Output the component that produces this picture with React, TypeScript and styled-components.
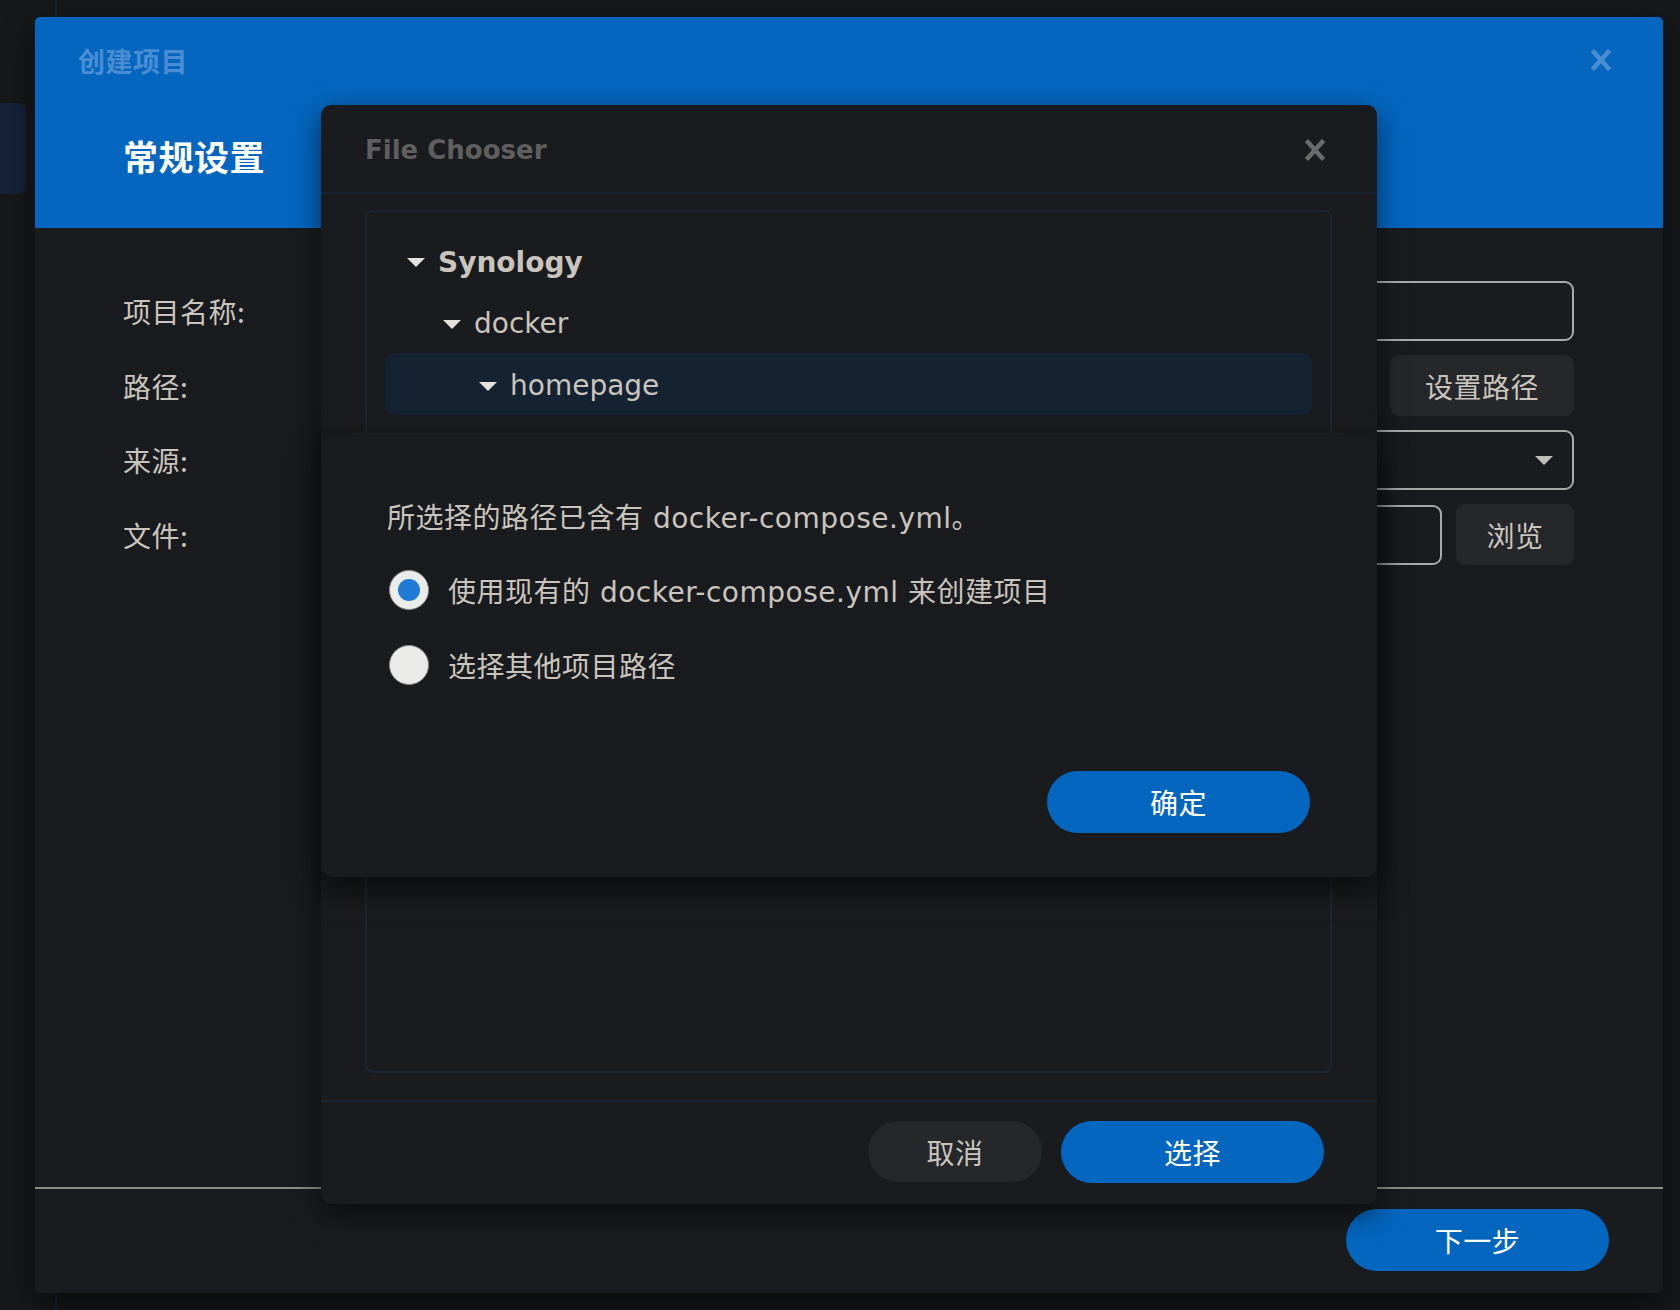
import styled, { createGlobalStyle } from "styled-components";

const GlobalStyle = createGlobalStyle`
  html, body {
    margin: 0;
    padding: 0;
    background: #17181a;
  }
  body {
    font-family: "DejaVu Sans", "Noto Sans CJK SC", sans-serif;
    color: #c9c5be;
  }
  * {
    box-sizing: border-box;
  }
`;

const BLUE = "#0466bf";
const TEXT = "#c9c5be";

const Desktop = styled.div`
  position: relative;
  width: 1680px;
  height: 1310px;
  overflow: hidden;
  padding: 17px 17px 0 35px;
  background: linear-gradient(
      to right,
      transparent 55px,
      #172235 55px,
      #172235 57px,
      transparent 57px
    ),
    #17181a;
`;

const SideTab = styled.div`
  position: absolute;
  left: 0;
  top: 103px;
  width: 26px;
  height: 91px;
  background: #16223a;
  border-radius: 0 8px 8px 0;
`;

const Wizard = styled.div`
  position: relative;
  width: 1628px;
  height: 1276px;
  display: flex;
  flex-direction: column;
  background: #1a1b1e;
  border-radius: 5px;
  overflow: hidden;
  box-shadow: 0 12px 30px rgba(0, 0, 0, 0.55);
`;

const WizardHeader = styled.div`
  height: 211px;
  flex: none;
  background: ${BLUE};
  padding-left: 43px;
  display: flex;
  flex-direction: column;
`;

const WizardTopBar = styled.div`
  height: 86px;
  display: flex;
  align-items: center;
  justify-content: space-between;
  padding-right: 50px;
`;

const WizardTitle = styled.div`
  font-family: "Noto Sans CJK SC", sans-serif;
  font-weight: 700;
  font-size: 27px;
  letter-spacing: 0.5px;
  color: #4b8dd3;
`;

const StepTitle = styled.div`
  margin: 33px 0 0 45px;
  line-height: 40px;
  font-family: "Noto Sans CJK SC", sans-serif;
  font-weight: 700;
  font-size: 35px;
  letter-spacing: 0.5px;
  color: #ffffff;
`;

const CloseIcon = ({ color }: { color: string }) => (
  <svg width={24} height={26} viewBox="0 0 24 26">
    <path
      d="M3.5 3.5 L20.5 22.5 M20.5 3.5 L3.5 22.5"
      stroke={color}
      strokeWidth={4.6}
      strokeLinecap="butt"
      fill="none"
    />
  </svg>
);

const FormBody = styled.div`
  flex: 1;
  padding: 53px 89px 0 88px;
  display: grid;
  grid-template-columns: 260px 1fr;
  grid-auto-rows: 60px;
  row-gap: 14.5px;
  align-items: center;
  align-content: start;
`;

const Label = styled.div`
  font-family: "Noto Sans CJK SC", sans-serif;
  font-size: 28px;
  letter-spacing: 0.5px;
  color: ${TEXT};
`;

const ControlRow = styled.div<{ $end?: boolean }>`
  display: flex;
  align-items: center;
  gap: 14px;
  height: 60px;
  justify-content: ${(p) => (p.$end ? "flex-end" : "flex-start")};
`;

const Field = styled.div`
  flex: 1;
  height: 60px;
  border: 2px solid #a9a9a9;
  border-radius: 9px;
  display: flex;
  align-items: center;
  justify-content: flex-end;
  padding-right: 19px;
`;

const Caret = styled.span<{ $color?: string }>`
  width: 0;
  height: 0;
  border-left: 9px solid transparent;
  border-right: 9px solid transparent;
  border-top: 9px solid ${(p) => p.$color ?? "#c0c0c0"};
  flex: none;
`;

const GrayButton = styled.button<{ $width: number; $pill?: boolean }>`
  width: ${(p) => p.$width}px;
  height: 61px;
  flex: none;
  border: none;
  border-radius: ${(p) => (p.$pill ? "31px" : "9px")};
  background: #25272a;
  color: ${TEXT};
  font-family: "Noto Sans CJK SC", sans-serif;
  font-size: 28px;
  letter-spacing: 0.5px;
  padding: 0;
`;

const BlueButton = styled.button<{ $width: number }>`
  width: ${(p) => p.$width}px;
  height: 62px;
  flex: none;
  border: none;
  border-radius: 31px;
  background: ${BLUE};
  color: #ffffff;
  font-family: "Noto Sans CJK SC", sans-serif;
  font-size: 28px;
  letter-spacing: 0.5px;
  padding: 0;
`;

const WizardFooter = styled.div`
  height: 106px;
  flex: none;
  border-top: 2px solid #8b8b89;
  padding: 20px 54px 0;
  display: flex;
  justify-content: flex-end;
  align-items: flex-start;
`;

/* File chooser */

const ChooserWindow = styled.div`
  position: absolute;
  left: 321px;
  top: 105px;
  width: 1056px;
  height: 1099px;
  background: #1a1b1e;
  border-radius: 10px;
  box-shadow: 0 10px 28px rgba(0, 0, 0, 0.55);
  display: flex;
  flex-direction: column;
`;

const ChooserHead = styled.div`
  height: 89px;
  flex: none;
  padding: 2px 50px 0 44px;
  display: flex;
  align-items: center;
  justify-content: space-between;
  border-bottom: 2px solid #1b2431;
`;

const ChooserTitle = styled.div`
  font-family: "DejaVu Sans", sans-serif;
  font-weight: 700;
  font-size: 26px;
  color: #5f5f5f;
`;

const ChooserBody = styled.div`
  flex: 1;
  padding: 16px 45px 27px 44px;
  display: flex;
`;

const TreeBox = styled.div`
  flex: 1;
  border: 2px solid #1d2531;
  border-radius: 8px;
  padding: 17px 18px;
`;

const TreeRow = styled.div<{ $level: number; $selected?: boolean }>`
  height: 62px;
  display: flex;
  align-items: center;
  gap: 13px;
  padding: 4px 0 0 ${(p) => 22 + p.$level * 36}px;
  border-radius: 10px;
  background: ${(p) => (p.$selected ? "#152232" : "transparent")};
`;

const TreeText = styled.span<{ $bold?: boolean }>`
  font-family: "DejaVu Sans", sans-serif;
  font-size: 28px;
  font-weight: ${(p) => (p.$bold ? 700 : 400)};
  color: ${TEXT};
  line-height: 1;
  margin-top: ${(p) => (p.$bold ? "2px" : "0")};
`;

const ChooserFooter = styled.div`
  height: 104px;
  flex: none;
  border-top: 2px solid #1b2634;
  padding: 19px 53px 0;
  display: flex;
  justify-content: flex-end;
  align-items: flex-start;
  gap: 19px;
`;

/* Confirmation message */

const MessageBox = styled.div`
  position: absolute;
  left: 321px;
  top: 433px;
  width: 1056px;
  height: 444px;
  background: #1a1b1e;
  border-radius: 12px;
  box-shadow: 0 12px 30px rgba(0, 0, 0, 0.6);
  padding: 66px 67px 44px 66px;
  display: flex;
  flex-direction: column;
`;

const MessageText = styled.div`
  line-height: 40px;
  font-size: 28px;
  letter-spacing: 0.5px;
  color: ${TEXT};
`;

const Options = styled.div`
  margin-top: 31px;
  padding-left: 2px;
  display: flex;
  flex-direction: column;
  gap: 35px;
`;

const OptionRow = styled.label`
  height: 40px;
  display: flex;
  align-items: center;
  gap: 19px;
  font-size: 28px;
  letter-spacing: 0.5px;
  color: ${TEXT};
`;

const Radio = styled.span<{ $checked?: boolean }>`
  width: 40px;
  height: 40px;
  flex: none;
  border-radius: 50%;
  background: #ebebe9;
  border: 1.5px solid #8e8e8c;
  display: flex;
  align-items: center;
  justify-content: center;

  &::after {
    content: "";
    width: 22px;
    height: 22px;
    border-radius: 50%;
    background: ${(p) => (p.$checked ? "#1f7bd6" : "transparent")};
  }
`;

const MessageActions = styled.div`
  margin-top: auto;
  display: flex;
  justify-content: flex-end;
`;

const tree = [
  { name: "Synology", level: 0, bold: true },
  { name: "docker", level: 1 },
  { name: "homepage", level: 2, selected: true },
];

export default function App() {
  return (
    <Desktop>
      <GlobalStyle />
      <SideTab />
      <Wizard>
        <WizardHeader>
          <WizardTopBar>
            <WizardTitle>创建项目</WizardTitle>
            <CloseIcon color="#4b8dd3" />
          </WizardTopBar>
          <StepTitle>常规设置</StepTitle>
        </WizardHeader>
        <FormBody>
          <Label>项目名称:</Label>
          <ControlRow>
            <Field />
          </ControlRow>
          <Label>路径:</Label>
          <ControlRow $end>
            <GrayButton $width={184}>设置路径</GrayButton>
          </ControlRow>
          <Label>来源:</Label>
          <ControlRow>
            <Field>
              <Caret $color="#bdbdbb" />
            </Field>
          </ControlRow>
          <Label>文件:</Label>
          <ControlRow>
            <Field />
            <GrayButton $width={118}>浏览</GrayButton>
          </ControlRow>
        </FormBody>
        <WizardFooter>
          <BlueButton $width={263}>下一步</BlueButton>
        </WizardFooter>
      </Wizard>

      <ChooserWindow>
        <ChooserHead>
          <ChooserTitle>File Chooser</ChooserTitle>
          <CloseIcon color="#6b6b6b" />
        </ChooserHead>
        <ChooserBody>
          <TreeBox>
            {tree.map((node) => (
              <TreeRow key={node.name} $level={node.level} $selected={node.selected}>
                <Caret $color="#e4e1dc" />
                <TreeText $bold={node.bold}>{node.name}</TreeText>
              </TreeRow>
            ))}
          </TreeBox>
        </ChooserBody>
        <ChooserFooter>
          <GrayButton $width={174} $pill>
            取消
          </GrayButton>
          <BlueButton $width={263}>选择</BlueButton>
        </ChooserFooter>
      </ChooserWindow>

      <MessageBox>
        <MessageText>所选择的路径已含有 docker-compose.yml。</MessageText>
        <Options>
          <OptionRow>
            <Radio $checked />
            使用现有的 docker-compose.yml 来创建项目
          </OptionRow>
          <OptionRow>
            <Radio />
            选择其他项目路径
          </OptionRow>
        </Options>
        <MessageActions>
          <BlueButton $width={263}>确定</BlueButton>
        </MessageActions>
      </MessageBox>
    </Desktop>
  );
}
